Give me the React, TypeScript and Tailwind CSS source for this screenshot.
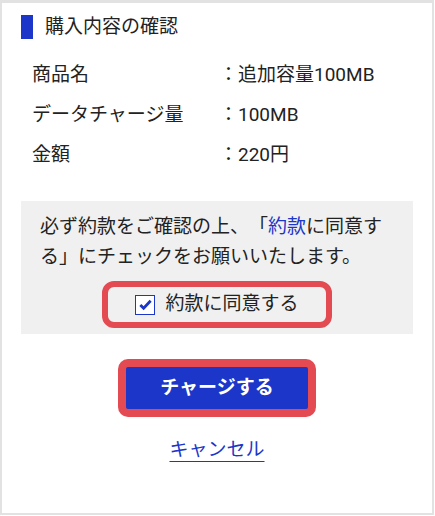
import React from "react";

const rows = [
  { label: "商品名", value: "追加容量100MB" },
  { label: "データチャージ量", value: "100MB" },
  { label: "金額", value: "220円" },
];

export default function App() {
  return (
    <div
      className="h-[516px] w-[435px] bg-white text-[#222] [text-spacing-trim:space-all]"
      style={{ fontFamily: 'Roboto, "Noto Sans CJK JP", sans-serif' }}
    >
      <div className="flex h-[515px] w-[434px] flex-col border-2 border-t-[3px] border-[#e2e2e2] bg-white">
        <div className="flex items-center gap-3 pl-[19px] pt-[12px]">
          <span className="h-6 w-3 bg-[#1b36c9]" />
          <h2 className="text-[19px] leading-6">購入内容の確認</h2>
        </div>

        <dl className="mt-[24px] flex flex-col gap-[16px] pl-[30px] text-[19px] leading-6">
          {rows.map((r) => (
            <div key={r.label} className="flex">
              <dt className="w-[187px]">{r.label}</dt>
              <dd>：{r.value}</dd>
            </div>
          ))}
        </dl>

        <div className="mx-[19px] mt-[34px] flex flex-col items-center bg-[#f0f0f0] px-[19px] pb-[6px] pt-[11px]">
          <p className="text-[19px] leading-[30px]">
            必ず約款をご確認の上、「<span className="text-[#1b36c9]">約款</span>に同意する」にチェックをお願いいたします。
          </p>
          <label className="mt-[9px] flex h-[47px] w-[230px] items-center justify-center gap-[10px] rounded-[12px] border-[6px] border-[#e34a52]">
            <span className="flex h-5 w-5 items-center justify-center border-[1.5px] border-[#1b36c9] bg-white">
              <svg viewBox="0 0 16 16" className="h-[15px] w-[15px]">
                <path d="M2.5 8.5l3.5 3.5 7.5-8" fill="none" stroke="#1b36c9" strokeWidth="3" />
              </svg>
            </span>
            <span className="text-[19px]">約款に同意する</span>
          </label>
        </div>

        <div className="mt-[25px] flex justify-center">
          <div className="rounded-[10px] bg-[#e34a52] p-[8px]">
            <button className="h-[42px] w-[182px] rounded-[2px] bg-[#1b36c9] text-[19px] font-bold text-white">
              チャージする
            </button>
          </div>
        </div>

        <div className="mt-[19px] flex justify-center">
          <a className="text-[19px] text-[#1b36c9] underline underline-offset-[5px]">キャンセル</a>
        </div>
      </div>
    </div>
  );
}
